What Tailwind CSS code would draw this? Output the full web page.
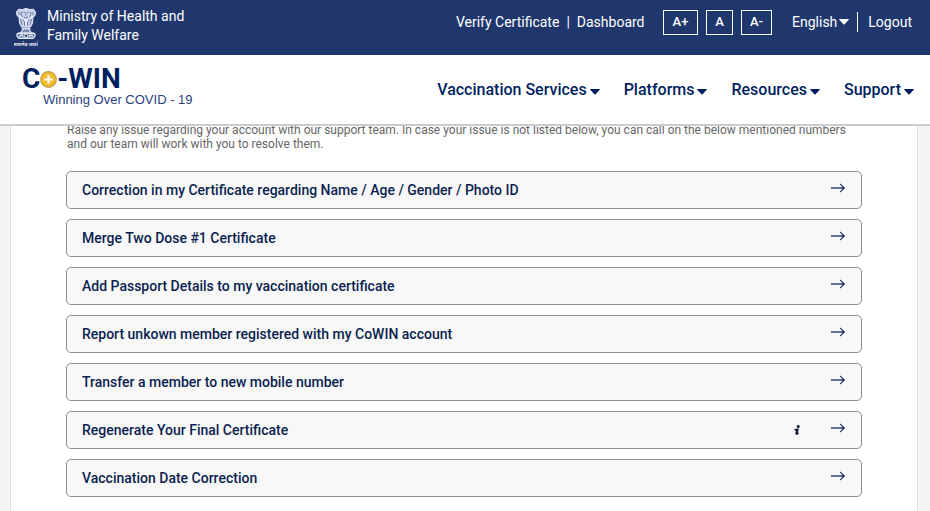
<!DOCTYPE html>
<html lang="en">
<head>
  <meta charset="UTF-8" />
  <meta name="viewport" content="width=device-width, initial-scale=1" />
  <title>Co-WIN</title>
  <script src="https://cdn.jsdelivr.net/npm/@tailwindcss/browser@4"></script>
</head>
<body class="min-h-screen flex flex-col bg-[#f5f5f5] font-[Roboto,sans-serif] text-[#001f60] overflow-hidden">
  <svg class="hidden">
    <symbol id="caret" viewBox="0 0 10 6"><path d="M0.6 0h8.8q.9 0 .3.8L5.6 5.2q-.6.6-1.2 0L.3.8Q-.3 0 .6 0z" fill="currentColor" /></symbol>
    <symbol id="arrow" viewBox="0 0 14 10"><path d="M0 5h13M9.2 1l4 4-4 4" fill="none" stroke="#35496f" stroke-width="1.3" /><path d="M11.6 3.6L13.7 5l-2.1 1.4z" fill="#0b1e48" /></symbol>
  </svg>

  <header class="relative z-10">
    <div class="h-[55px] bg-[#1f376d] text-white flex items-start justify-between pl-3.5 pr-[18px]">
      <div class="flex gap-[9px] pt-[7px]">
        <!-- state emblem -->
        <svg class="w-6 h-10 mt-px" viewBox="0 0 24 40" fill="none" stroke="#e8edf7">
          <path d="M8.500 1.500Q12-.6 15.500 1.500l4-.3L21.500 4l-.5 3.500-2 2-.5 6-2 3.500h-9l-2-3.500-.5-6-2-2L2.500 4l2-2.800z" fill="#ccd5e8" stroke-width=".9" />
          <path d="M4 4l2 1.500L4.500 7M20 4l-2 1.500L19.500 7M9.500 4.500h1.500M13 4.500h1.500M12 4.500v3M10 9q2 1.500 4 0M8 3.500L7 6l1.500 3M16 3.500L17 6l-1.500 3M8.500 11.500l2 2.500v4M15.500 11.500l-2 2.500v4M6.500 11l1.500 6M17.500 11L16 17" stroke="#4b619a" stroke-width=".8" />
          <path d="M10 11.500l2 1.500 2-1.500M12 13v5M5 8.500l3 1.500M19 8.500l-3 1.500" stroke="#fff" stroke-width="1" />
          <path d="M7.500 20.200h9" stroke-width="1.200" />
          <path d="M8.500 21Q8.500 23.500 5 25.500h14Q15.500 23.500 15.500 21z" fill="#a9b6d2" stroke-width="1" />
          <path d="M10.300 21.500l-.8 3M12 21.500v3M13.700 21.500l.8 3" stroke="#2c447b" stroke-width=".8" />
          <path d="M4.500 25.300h15q1.500 0 1.500 2t-2 3H5q-2-1-2-3t1.500-2z" stroke-width="1.400" fill="#5a6f9f" />
          <circle cx="12" cy="27.700" r="1.700" fill="#1f376d" stroke-width="1" />
          <path d="M5.500 28.800l1-1.700h2l.5 1.700M15 28.800l1-1.700h2l.5 1.700" stroke-width="1.400" />
          <text x="12" y="38" text-anchor="middle" font-size="5" font-weight="bold" font-family="Noto Sans, sans-serif" fill="#e8edf7" stroke="none">सत्यमेव जयते</text>
        </svg>
        <p class="text-[14px] leading-[19px]">Ministry of Health and<br />Family Welfare</p>
      </div>
      <div class="flex items-center h-6 mt-2.5 text-[14px]">
        <a href="#">Verify Certificate</a>
        <span class="mx-[7px]">|</span>
        <a href="#">Dashboard</a>
        <div class="flex gap-2 ml-[18px] text-[13px] font-medium">
          <button class="h-[25px] px-[9px] border border-white">A+</button>
          <button class="h-[25px] px-2 border border-white">A</button>
          <button class="h-[25px] px-2 border border-white">A-</button>
        </div>
        <button class="flex items-center gap-0.5 ml-5">English<svg class="w-2.5 h-1.5"><use href="#caret" /></svg></button>
        <span class="w-px h-5 bg-white ml-2 mr-2.5"></span>
        <a href="#">Logout</a>
      </div>
    </div>

    <div class="h-[71px] bg-white border-b-2 border-[#cccccc] flex items-start justify-between pl-[22px] pr-4">
      <a href="#" class="flex flex-col pt-2.5">
        <span class="flex items-center h-[27px] text-[28px] font-bold leading-[27px]">C<svg class="w-[17px] h-[17px] mt-0.5" viewBox="0 0 17 17"><circle cx="8.500" cy="8.500" r="7.800" fill="#f2bd2c" stroke="#c8a04a" stroke-width="1.200" /><path d="M8.500 4.200v8.600M4.200 8.500h8.600" stroke="#fff" stroke-width="2.200" /></svg>-WIN</span>
        <span class="pl-[21px] font-['Liberation_Sans',sans-serif] text-[13px] leading-[16px] text-[#2c427f]">Winning Over COVID - 19</span>
      </a>
      <nav class="flex gap-6 pt-[25px] text-[16px] leading-5 font-medium">
        <button class="flex items-center gap-[3px]">Vaccination Services<svg class="w-2.5 h-1.5 mt-1"><use href="#caret" /></svg></button>
        <button class="flex items-center gap-[3px]">Platforms<svg class="w-2.5 h-1.5 mt-1"><use href="#caret" /></svg></button>
        <button class="flex items-center gap-[3px]">Resources<svg class="w-2.5 h-1.5 mt-1"><use href="#caret" /></svg></button>
        <button class="flex items-center gap-[3px]">Support<svg class="w-2.5 h-1.5 mt-1"><use href="#caret" /></svg></button>
      </nav>
    </div>
  </header>

  <!-- content is scrolled a few pixels under the header -->
  <main class="grow -mt-1 ml-2.5 mr-3 px-[55px] pb-3.5 bg-white border-x border-[#dedede]">
    <p class="pl-px pt-px text-[12px] leading-[14px] text-[#666666]">Raise any issue regarding your account with our support team. In case your issue is not listed below, you can call on the below mentioned numbers and our team will work with you to resolve them.</p>
    <div class="flex flex-col gap-2.5 mt-5 text-[14px] font-medium text-[#0a1f4f]">
      <button class="flex items-center h-[38px] pl-[15px] pr-4 border border-[#8f9096] rounded-[5px] bg-[#f8f8f8]"><span class="grow text-left">Correction in my Certificate regarding Name / Age / Gender / Photo ID</span><svg class="w-3.5 h-2.5 mb-1"><use href="#arrow" /></svg></button>
      <button class="flex items-center h-[38px] pl-[15px] pr-4 border border-[#8f9096] rounded-[5px] bg-[#f8f8f8]"><span class="grow text-left">Merge Two Dose #1 Certificate</span><svg class="w-3.5 h-2.5 mb-1"><use href="#arrow" /></svg></button>
      <button class="flex items-center h-[38px] pl-[15px] pr-4 border border-[#8f9096] rounded-[5px] bg-[#f8f8f8]"><span class="grow text-left">Add Passport Details to my vaccination certificate</span><svg class="w-3.5 h-2.5 mb-1"><use href="#arrow" /></svg></button>
      <button class="flex items-center h-[38px] pl-[15px] pr-4 border border-[#8f9096] rounded-[5px] bg-[#f8f8f8]"><span class="grow text-left">Report unkown member registered with my CoWIN account</span><svg class="w-3.5 h-2.5 mb-1"><use href="#arrow" /></svg></button>
      <button class="flex items-center h-[38px] pl-[15px] pr-4 border border-[#8f9096] rounded-[5px] bg-[#f8f8f8]"><span class="grow text-left">Transfer a member to new mobile number</span><svg class="w-3.5 h-2.5 mb-1"><use href="#arrow" /></svg></button>
      <button class="flex items-center h-[38px] pl-[15px] pr-4 border border-[#8f9096] rounded-[5px] bg-[#f8f8f8]"><span class="grow text-left">Regenerate Your Final Certificate</span><svg class="w-1.5 h-2.5 mr-[31px]" viewBox="0 0 6 10"><circle cx="4.200" cy="1.500" r="1.500" fill="#0a1633" /><path d="M.6 4.700h3L2.300 8.300q0 .8 2.200-.2" fill="none" stroke="#0a1633" stroke-width="2" /></svg><svg class="w-3.5 h-2.5 mb-1"><use href="#arrow" /></svg></button>
      <button class="flex items-center h-[38px] pl-[15px] pr-4 border border-[#8f9096] rounded-[5px] bg-[#f8f8f8]"><span class="grow text-left">Vaccination Date Correction</span><svg class="w-3.5 h-2.5 mb-1"><use href="#arrow" /></svg></button>
    </div>
  </main>
</body>
</html>
